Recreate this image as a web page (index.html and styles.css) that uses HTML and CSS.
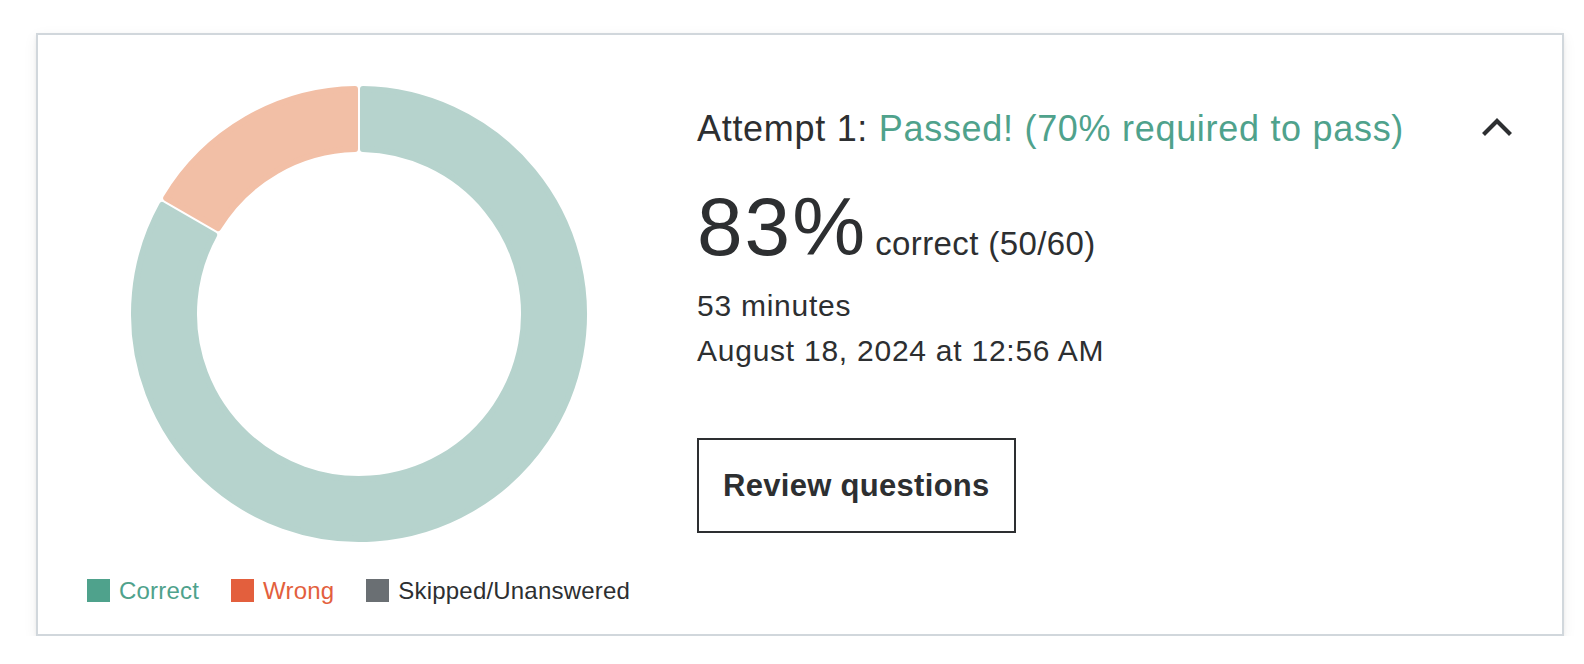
FILE: index.html
```html
<!DOCTYPE html>
<html lang="en">
<head>
<meta charset="utf-8">
<title>Attempt result</title>
<link rel="stylesheet" href="styles.css">
</head>
<body>
<div class="page">
  <section class="card">
    <div class="chart-col">
      <svg class="donut" width="460" height="460" viewBox="0 0 460 460" aria-label="Result chart">
        <path class="seg seg-correct" d="M234 5.036 A225 225 0 1 1 33.175 120.982 L85.149 150.989 A165 165 0 1 0 234 65.05 Z"/>
        <path class="seg seg-wrong" d="M37.175 114.054 A225 225 0 0 1 226 5.036 L226 65.05 A165 165 0 0 0 89.149 144.061 Z"/>
      </svg>
      <ul class="legend">
        <li class="legend-item legend-correct"><span class="swatch"></span>Correct</li>
        <li class="legend-item legend-wrong"><span class="swatch"></span>Wrong</li>
        <li class="legend-item legend-skipped"><span class="swatch"></span>Skipped/Unanswered</li>
      </ul>
    </div>
    <div class="info-col">
      <div class="info-header">
        <h2 class="attempt-title">Attempt 1: <span class="passed">Passed! (70% required to pass)</span></h2>
        <button class="collapse-btn" aria-label="Collapse">
          <svg width="32" height="20" viewBox="0 0 32 20"><polyline points="2.5,17.5 16,4 29.5,17.5" fill="none" stroke="#2d2f31" stroke-width="4.2"/></svg>
        </button>
      </div>
      <div class="score-row">
        <span class="score">83%</span>
        <span class="score-detail">correct (50/60)</span>
      </div>
      <p class="meta">53 minutes</p>
      <p class="meta">August 18, 2024 at 12:56 AM</p>
      <button class="review-btn">Review questions</button>
    </div>
  </section>
</div>
</body>
</html>
```

FILE: styles.css
```css
* { box-sizing: border-box; }

html, body {
  margin: 0;
  padding: 0;
  background: #ffffff;
}

body {
  font-family: "Liberation Sans", Arial, sans-serif;
  color: #2d2f31;
}

.page {
  padding: 33px 20px 0 36px;
}

.card {
  width: 1528px;
  height: 603px;
  border: 2px solid #d1d7dc;
  background: #ffffff;
  box-shadow: 0 2px 4px rgba(0, 0, 0, 0.06), 0 4px 14px rgba(0, 0, 0, 0.06);
  display: flex;
  padding: 49px 49px 0 48px;
  gap: 66px;
}

.chart-col {
  width: 545px;
  flex: none;
  display: flex;
  flex-direction: column;
  align-items: center;
}

.donut {
  display: block;
}

.seg {
  stroke-width: 6;
  stroke-linejoin: round;
}

.seg-correct {
  fill: #b6d3cd;
  stroke: #b6d3cd;
}

.seg-wrong {
  fill: #f2bfa6;
  stroke: #f2bfa6;
}

.legend {
  list-style: none;
  margin: 35px 0 0;
  padding: 0;
  display: flex;
  gap: 32px;
  font-size: 24px;
  letter-spacing: 0.2px;
  line-height: 23px;
}

.legend-item {
  display: flex;
  align-items: center;
  gap: 9px;
}

.swatch {
  width: 23px;
  height: 23px;
  flex: none;
}

.legend-correct { color: #4fa28c; }
.legend-correct .swatch { background: #4fa28c; }
.legend-wrong { color: #e35f3d; }
.legend-wrong .swatch { background: #e35f3d; }
.legend-skipped { color: #2d2f31; }
.legend-skipped .swatch { background: #6a6f73; }

.info-col {
  flex: 1;
  display: flex;
  flex-direction: column;
  align-items: flex-start;
}

.info-header {
  width: 100%;
  display: flex;
  align-items: center;
  justify-content: space-between;
  margin-top: 23px;
}

.attempt-title {
  margin: 0;
  font-size: 36px;
  font-weight: 400;
  letter-spacing: 0.7px;
  line-height: 43px;
}

.passed {
  color: #4fa28c;
}

.collapse-btn {
  border: 0;
  background: none;
  padding: 0;
  margin: 0;
  display: flex;
  margin-top: -4px;
}

.collapse-btn svg {
  display: block;
}

.score-row {
  display: flex;
  align-items: baseline;
  margin-top: 36px;
}

.score {
  font-size: 82px;
  line-height: 82px;
  letter-spacing: 2px;
}

.score-detail {
  font-size: 33px;
  letter-spacing: 0.4px;
  margin-left: 8px;
}

.meta {
  margin: 0;
  font-size: 30px;
  line-height: 45px;
  letter-spacing: 0.75px;
}

.score-row + .meta {
  margin-top: 15px;
}

.review-btn {
  margin-top: 65px;
  height: 95px;
  padding: 0 24px;
  border: 2px solid #2d2f31;
  background: #ffffff;
  color: #2d2f31;
  font-family: "Liberation Sans", Arial, sans-serif;
  font-size: 31px;
  font-weight: 700;
  letter-spacing: 0.3px;
  cursor: pointer;
}
```
